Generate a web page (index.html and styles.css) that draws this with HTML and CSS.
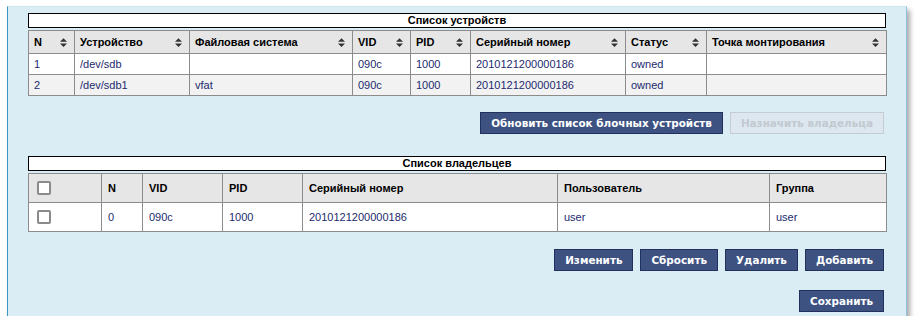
FILE: index.html
```html
<!DOCTYPE html>
<html>
<head>
<meta charset="utf-8">
<link rel="stylesheet" href="styles.css">
</head>
<body>
<div class="panel">
  <div class="caption">Список устройств</div>
  <table class="grid devices">
    <colgroup>
      <col class="c-n"><col class="c-dev"><col class="c-fs"><col class="c-vid"><col class="c-pid"><col class="c-ser"><col class="c-st"><col class="c-mnt">
    </colgroup>
    <thead>
      <tr>
        <th><div class="th"><span>N</span><svg class="sort" viewBox="0 0 8 10"><path d="M4 0L8 4H0Z M4 10L0 6H8Z"/></svg></div></th>
        <th><div class="th"><span>Устройство</span><svg class="sort" viewBox="0 0 8 10"><path d="M4 0L8 4H0Z M4 10L0 6H8Z"/></svg></div></th>
        <th><div class="th"><span>Файловая система</span><svg class="sort" viewBox="0 0 8 10"><path d="M4 0L8 4H0Z M4 10L0 6H8Z"/></svg></div></th>
        <th><div class="th"><span>VID</span><svg class="sort" viewBox="0 0 8 10"><path d="M4 0L8 4H0Z M4 10L0 6H8Z"/></svg></div></th>
        <th><div class="th"><span>PID</span><svg class="sort" viewBox="0 0 8 10"><path d="M4 0L8 4H0Z M4 10L0 6H8Z"/></svg></div></th>
        <th><div class="th"><span>Серийный номер</span><svg class="sort" viewBox="0 0 8 10"><path d="M4 0L8 4H0Z M4 10L0 6H8Z"/></svg></div></th>
        <th><div class="th"><span>Статус</span><svg class="sort" viewBox="0 0 8 10"><path d="M4 0L8 4H0Z M4 10L0 6H8Z"/></svg></div></th>
        <th><div class="th"><span>Точка монтирования</span><svg class="sort" viewBox="0 0 8 10"><path d="M4 0L8 4H0Z M4 10L0 6H8Z"/></svg></div></th>
      </tr>
    </thead>
    <tbody>
      <tr><td>1</td><td>/dev/sdb</td><td></td><td>090c</td><td>1000</td><td>2010121200000186</td><td>owned</td><td></td></tr>
      <tr class="alt"><td>2</td><td>/dev/sdb1</td><td>vfat</td><td>090c</td><td>1000</td><td>2010121200000186</td><td>owned</td><td></td></tr>
    </tbody>
  </table>

  <div class="actions first">
    <button class="btn">Обновить список блочных устройств</button>
    <button class="btn disabled" disabled>Назначить владельца</button>
  </div>

  <div class="caption second">Список владельцев</div>
  <table class="grid owners">
    <colgroup>
      <col class="o-chk"><col class="o-n"><col class="o-vid"><col class="o-pid"><col class="o-ser"><col class="o-user"><col class="o-grp">
    </colgroup>
    <thead>
      <tr>
        <th><span class="chk"></span></th>
        <th>N</th>
        <th>VID</th>
        <th>PID</th>
        <th>Серийный номер</th>
        <th>Пользователь</th>
        <th>Группа</th>
      </tr>
    </thead>
    <tbody>
      <tr><td><span class="chk"></span></td><td>0</td><td>090c</td><td>1000</td><td>2010121200000186</td><td>user</td><td>user</td></tr>
    </tbody>
  </table>

  <div class="actions second-row">
    <button class="btn">Изменить</button>
    <button class="btn">Сбросить</button>
    <button class="btn">Удалить</button>
    <button class="btn">Добавить</button>
  </div>
  <div class="actions save-row">
    <button class="btn">Сохранить</button>
  </div>
</div>
</body>
</html>
```
FILE: styles.css
```css
html, body {
  margin: 0;
  padding: 0;
  background: #ffffff;
}
body {
  font-family: "Liberation Sans", Arial, sans-serif;
  font-size: 11px;
}
.panel {
  box-sizing: border-box;
  margin: 6px 0 0 7px;
  width: 900px;
  height: 310px;
  background: #daedf5;
  border-left: 1px solid #3a96c4;
  border-right: 1px solid #8fc3de;
  border-top: 1px solid #d0e6f0;
  padding: 6px 20px 0 20px;
  box-shadow: 3px 4px 5px rgba(0, 0, 0, 0.35);
}
.caption {
  box-sizing: border-box;
  width: 858px;
  height: 15px;
  border: 1px solid #000;
  background: #fff;
  text-align: center;
  font-weight: bold;
  line-height: 13px;
  color: #000;
}
.grid {
  margin-top: 2px;
  border-collapse: collapse;
  table-layout: fixed;
  width: 858px;
  background: #fff;
}
.grid th, .grid td {
  border: 1px solid #8c8c8c;
  text-align: left;
  padding: 0 5px;
  white-space: nowrap;
  overflow: hidden;
}
.grid th {
  background: #e6e6e6;
  color: #000;
  font-weight: bold;
}
.grid td {
  color: #1c2a6e;
}
.devices th { height: 22px; }
.devices td { height: 20px; }
.devices tr.alt td { background: #f2f2f2; }
.th {
  display: flex;
  align-items: center;
  justify-content: space-between;
  padding-right: 2px;
}
.sort {
  width: 7px;
  height: 9px;
  fill: #333;
}
.c-n { width: 46px; }
.c-dev { width: 115px; }
.c-fs { width: 163px; }
.c-vid { width: 58px; }
.c-pid { width: 60px; }
.c-ser { width: 155px; }
.c-st { width: 81px; }
.c-mnt { width: 180px; }

.owners th, .owners td { height: 28px; padding: 0 6px; }
.owners th:first-child, .owners td:first-child { padding-left: 8px; }
.o-chk { width: 73px; }
.o-n { width: 41px; }
.o-vid { width: 80px; }
.o-pid { width: 80px; }
.o-ser { width: 255px; }
.o-user { width: 212px; }
.o-grp { width: 117px; }
.chk {
  display: block;
  box-sizing: border-box;
  width: 14px;
  height: 14px;
  border: 2px solid #8a8a8a;
  border-radius: 2px;
  background: #fff;
}

.actions {
  display: flex;
  justify-content: flex-end;
  gap: 7px;
  width: 856px;
}
.actions.first { margin-top: 16px; }
.caption.second { margin-top: 22px; }
.actions.second-row { margin-top: 17px; }
.actions.save-row { margin-top: 19px; }
.btn {
  box-sizing: border-box;
  height: 22px;
  padding: 0 10px;
  background: #3e5282;
  border: 1px solid #22315c;
  color: #fff;
  font-family: "DejaVu Sans", sans-serif;
  font-weight: bold;
  font-size: 10.4px;
  border-radius: 0;
}
.btn.disabled {
  background: #dde7ef;
  border: 1px solid #c6ccd2;
  color: #c2c9d1;
}
```
